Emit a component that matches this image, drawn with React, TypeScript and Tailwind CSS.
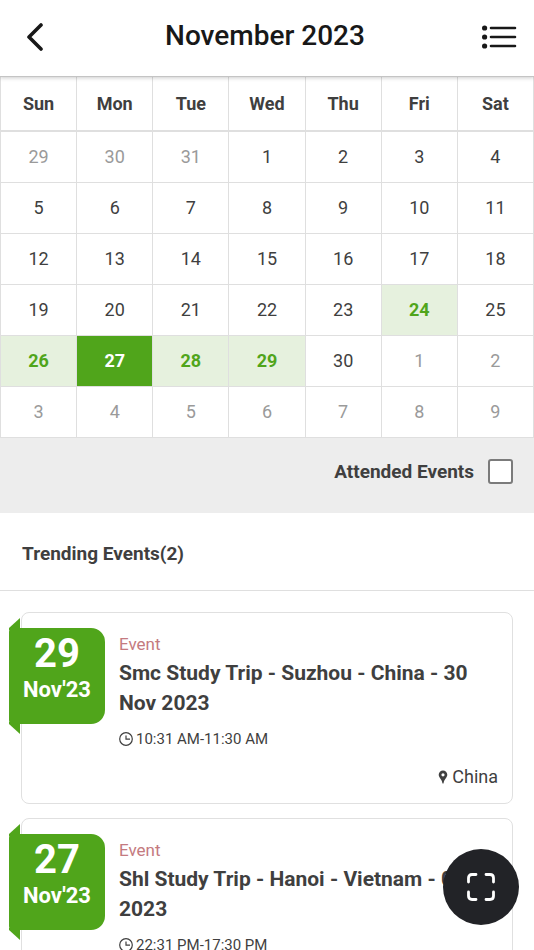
import { useState } from "react";
import clsx from "clsx";

type Tone = "muted" | "normal" | "event" | "today";

interface Day {
  label: number;
  tone: Tone;
}

interface EventItem {
  day: string;
  month: string;
  title: string;
  time: string;
  place: string;
}

const weekDays = ["Sun", "Mon", "Tue", "Wed", "Thu", "Fri", "Sat"];
const eventDays = [24, 26, 28, 29];
const today = 27;

const events: EventItem[] = [
  {
    day: "29",
    month: "Nov'23",
    title: "Smc Study Trip - Suzhou - China - 30 Nov 2023",
    time: "10:31 AM-11:30 AM",
    place: "China",
  },
  {
    day: "27",
    month: "Nov'23",
    title: "Shl Study Trip - Hanoi - Vietnam - 01 Dec 2023",
    time: "22:31 PM-17:30 PM",
    place: "Vietnam",
  },
];

const toneClasses: Record<Tone, string> = {
  muted: "text-[#9a9a9a]",
  normal: "text-[#3f3f3f]",
  event: "bg-[#e6f1de] font-bold text-[#50a51b]",
  today: "bg-[#50a51b] font-bold text-white",
};

// November 2023 starts on a Wednesday, so three days of October come first
const buildWeeks = (): Day[][] => {
  const days: Day[] = [];
  for (let i = 0; i < 42; i++) {
    const date = i - 2;
    if (date < 1) {
      days.push({ label: 31 + date, tone: "muted" });
    } else if (date > 30) {
      days.push({ label: date - 30, tone: "muted" });
    } else if (date === today) {
      days.push({ label: date, tone: "today" });
    } else {
      days.push({
        label: date,
        tone: eventDays.includes(date) ? "event" : "normal",
      });
    }
  }
  return [0, 1, 2, 3, 4, 5].map((w) => days.slice(w * 7, w * 7 + 7));
};

const Header = () => (
  <header className="relative flex h-[77px] shrink-0 items-center justify-between border-b border-[#c4c4c4] bg-white px-4 pb-1 shadow-[0_1px_4px_rgba(0,0,0,0.2)]">
    <button type="button" aria-label="Back" className="py-1">
      <svg width="32" height="30" viewBox="0 0 32 30" fill="none">
        <path
          d="M25 4L13 16L25 28"
          stroke="#181818"
          strokeWidth="3.6"
          strokeLinecap="round"
          strokeLinejoin="round"
        />
      </svg>
    </button>
    <h1 className="text-[28px] font-medium text-[#181818]">November 2023</h1>
    <button type="button" aria-label="List view">
      <svg width="36" height="26" viewBox="0 0 36 26" fill="none">
        <g fill="#181818">
          <circle cx="2.6" cy="5" r="2.6" />
          <circle cx="2.6" cy="14" r="2.6" />
          <circle cx="2.6" cy="23" r="2.6" />
        </g>
        <path
          d="M9 5H33M9 14H33M9 23H33"
          stroke="#181818"
          strokeWidth="2.6"
          strokeLinecap="round"
        />
      </svg>
    </button>
  </header>
);

const Calendar = () => (
  <table className="w-full table-fixed border-collapse text-center text-lg">
    <thead>
      <tr className="h-[54px]">
        {weekDays.map((name) => (
          <th
            key={name}
            scope="col"
            className="border-x border-b-2 border-[#dfdfdf] p-0 font-bold text-[#3f3f3f]"
          >
            {name}
          </th>
        ))}
      </tr>
    </thead>
    <tbody>
      {buildWeeks().map((week, index) => (
        <tr key={index} className="h-[51px]">
          {week.map((day) => (
            <td
              key={day.label}
              className={clsx("border border-[#dfdfdf] p-0", toneClasses[day.tone])}
            >
              {day.label}
            </td>
          ))}
        </tr>
      ))}
    </tbody>
  </table>
);

const DateBadge = ({ day, month }: { day: string; month: string }) => (
  <div className="relative mt-[15px] -ml-[13px] flex h-24 w-24 shrink-0 flex-col items-center rounded-l-sm rounded-r-[14px] bg-[#50a51b] pt-1 font-bold text-white">
    {/* folded ribbon ends above and below the badge */}
    <svg
      className="absolute bottom-full left-0"
      width="11"
      height="10"
      viewBox="0 0 11 10"
      overflow="visible"
    >
      <path d="M0 12V10L11 0V12Z" fill="#50a51b" />
    </svg>
    <svg
      className="absolute top-full left-0"
      width="11"
      height="10"
      viewBox="0 0 11 10"
      overflow="visible"
    >
      <path d="M0 -2H11V10L0 0Z" fill="#50a51b" />
    </svg>
    <span className="text-[40px] leading-[44px]">{day}</span>
    <span className="text-[22px] leading-7">{month}</span>
  </div>
);

const EventCard = ({ item }: { item: EventItem }) => (
  <article className="flex rounded-lg border border-[#e0e0e0] bg-white">
    <DateBadge day={item.day} month={item.month} />
    <div className="flex min-w-0 flex-1 flex-col px-[14px] pt-[19px] pb-3 text-[#3f3f3f]">
      <p className="text-[17px] leading-6 text-[#c47a80]">Event</p>
      <h3 className="mt-0.5 -mr-[10px] text-[21px] leading-[30px] font-bold">
        {item.title}
      </h3>
      <p className="mt-[9px] flex items-center gap-[3px] text-[15px] leading-6">
        <svg width="14" height="14" viewBox="0 0 14 14" fill="none" stroke="#3f3f3f">
          <circle cx="7" cy="7" r="6.3" strokeWidth="1.2" />
          <path d="M7 3.4V7.2H11" strokeWidth="1.2" />
        </svg>
        {item.time}
      </p>
      <p className="mt-3 flex items-center justify-end gap-1 text-lg leading-7">
        <svg width="10" height="14" viewBox="0 0 10 14">
          <path
            fillRule="evenodd"
            fill="#3f3f3f"
            d="M5 0.5A4.3 4.3 0 0 0 0.7 4.8C0.7 7.8 4.2 9.8 4.4 13.2Q5 13.8 5.6 13.2C5.8 9.8 9.3 7.8 9.3 4.8A4.3 4.3 0 0 0 5 0.5ZM5 3.2A1.6 1.6 0 1 1 5 6.4A1.6 1.6 0 0 1 5 3.2Z"
          />
        </svg>
        {item.place}
      </p>
    </div>
  </article>
);

const App = () => {
  const [attended, setAttended] = useState(false);

  return (
    <div className="flex h-screen flex-col overflow-hidden bg-white font-[Roboto,sans-serif]">
      <Header />
      <main className="flex-1 overflow-y-auto [scrollbar-width:none]">
        <Calendar />
        <div className="flex h-[75px] items-start justify-end bg-[#ededed] px-[21px] pt-5">
          <label className="flex items-center gap-[14px] text-[19px] font-bold text-[#3f3f3f]">
            Attended Events
            <input
              type="checkbox"
              checked={attended}
              onChange={(e) => setAttended(e.target.checked)}
              className="size-[25px] appearance-none rounded-[3px] border-2 border-[#7b7b7b] bg-white checked:bg-[#50a51b]"
            />
          </label>
        </div>
        <h2 className="border-b border-[#dfdfdf] px-[22px] pt-[27px] pb-[22px] text-[19px] leading-7 font-bold text-[#3f3f3f]">
          Trending Events(2)
        </h2>
        <section className="flex flex-col gap-[14px] px-[21px] py-[21px]">
          {events.map((item) => (
            <EventCard key={item.day} item={item} />
          ))}
        </section>
      </main>
      <button
        type="button"
        aria-label="Scan"
        className="fixed right-[15px] bottom-[25px] flex size-[76px] items-center justify-center rounded-full bg-[#222327]"
      >
        <svg width="28" height="28" viewBox="0 0 28 28" fill="none">
          <path
            d="M1.5 9V5Q1.5 1.5 5 1.5H9M19 1.5H23Q26.5 1.5 26.5 5V9M26.5 19V23Q26.5 26.5 23 26.5H19M9 26.5H5Q1.5 26.5 1.5 23V19"
            stroke="#fff"
            strokeWidth="2.8"
            strokeLinecap="round"
          />
        </svg>
      </button>
    </div>
  );
};

export default App;
